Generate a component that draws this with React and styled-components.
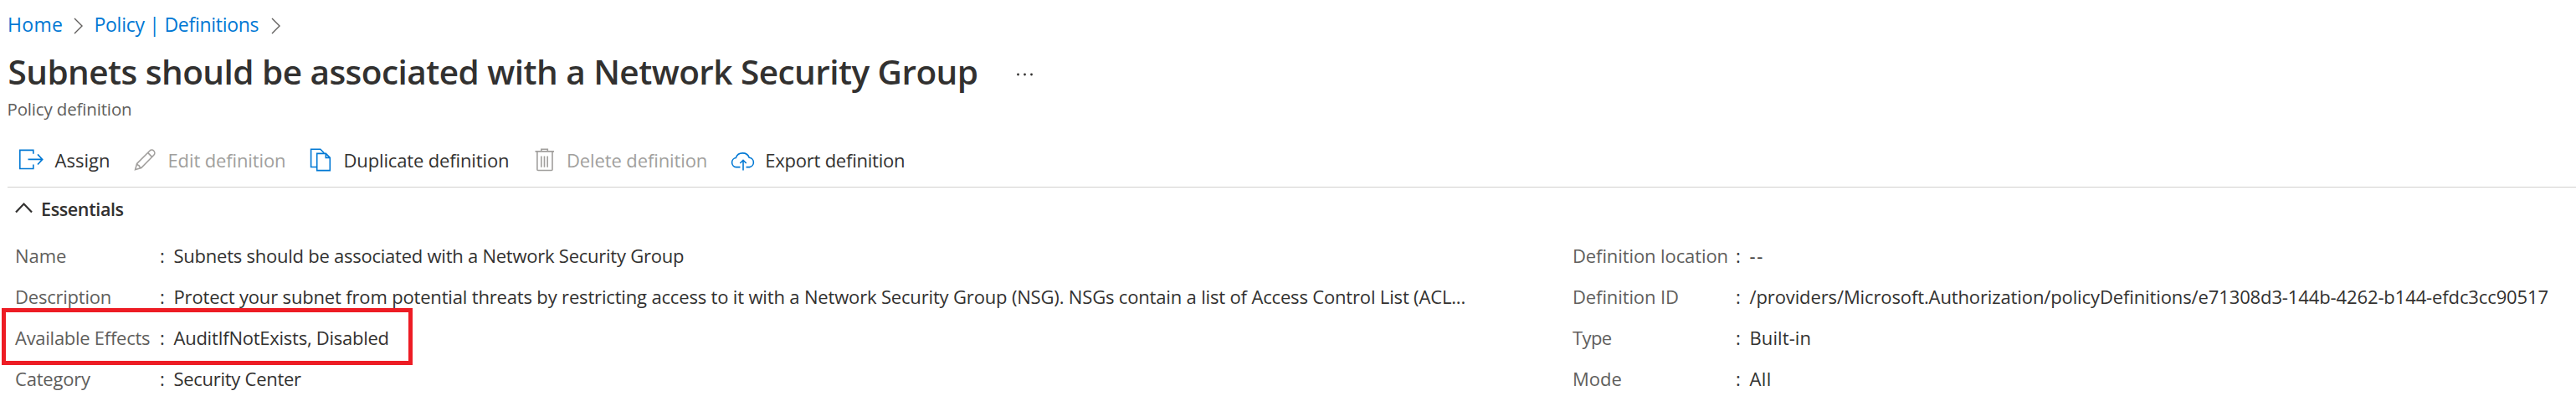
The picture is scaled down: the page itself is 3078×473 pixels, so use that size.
import React from "react";
import styled, { createGlobalStyle } from "styled-components";

const GlobalStyle = createGlobalStyle`
  body {
    margin: 0;
    background: #fff;
    color: #323130;
    font-family: "Open Sans", "Noto Sans", sans-serif;
    font-size: 22px;
  }
`;

const Page = styled.main`
  width: 3078px;
  height: 473px;
  overflow: hidden;
  white-space: nowrap;
`;

const Text = styled.span`
  letter-spacing: ${(p) => p.$ls || 0}px;
`;

const Breadcrumb = styled.nav`
  display: flex;
  align-items: center;
  height: 58px;
  padding-left: 9px;
  font-size: 23px;
`;

const Crumb = styled.a`
  width: ${(p) => p.$width}px;
  padding-bottom: 1px;
  color: #0078d4;
  letter-spacing: ${(p) => p.$ls}px;
`;

const CrumbChevron = styled.svg`
  width: 12px;
  height: 20px;
  margin: 3px 13px 0 0;
  fill: none;
  stroke: #605e5c;
  stroke-width: 1.4;
`;

const TitleRow = styled.div`
  display: flex;
  align-items: center;
  height: 56px;
  padding-left: 9.5px;
`;

const Title = styled.h1`
  width: 1203.5px;
  margin: 0;
  font-size: 40.5px;
  font-weight: 600;
  line-height: 56px;
  letter-spacing: -0.53px;
`;

const MoreButton = styled.svg`
  width: 22px;
  height: 6px;
  margin-top: 6px;
  fill: #323130;
`;

const Subtitle = styled.div`
  height: 32px;
  padding-left: 8.5px;
  color: #605e5c;
  font-size: 20.5px;
  line-height: 32px;
  letter-spacing: -0.16px;
`;

const Toolbar = styled.div`
  display: flex;
  align-items: center;
  height: 47px;
  margin: 22px 0 0 9px;
  padding: 0 0 8px 11px;
  border-bottom: 1px solid #d2d0ce;
`;

const ToolButton = styled.button`
  display: flex;
  align-items: center;
  gap: 13.5px;
  width: ${(p) => p.$width}px;
  height: 47px;
  padding: 0;
  border: 0;
  background: none;
  font: inherit;
  color: ${(p) => (p.disabled ? "#a19f9d" : "#323130")};
`;

const ToolText = styled(Text)`
  padding-bottom: 2px;
`;

const ToolIcon = styled.svg`
  flex: none;
  width: 32px;
  height: 33px;
  overflow: visible;
  fill: none;
  stroke: ${(p) => (p.$muted ? "#a19f9d" : "#0078d4")};
  stroke-width: 1.6;
`;

const EssentialsHeader = styled.div`
  display: flex;
  align-items: center;
  height: 51px;
  margin-bottom: 6px;
  padding-left: 18px;
  font-size: 21.5px;
  font-weight: 600;
`;

const Caret = styled.svg`
  width: 21px;
  height: 14px;
  margin: 0 10px 3px 0;
  fill: none;
  stroke: #323130;
  stroke-width: 2.2;
`;

const Essentials = styled.section`
  display: grid;
  grid-template-columns: 1861px 1fr;
  padding-left: 17px;
`;

const Column = styled.div`
  display: grid;
  grid-template-columns: ${(p) => p.$labelWidth}px 16.5px 1fr;
  grid-auto-rows: 49px;
  line-height: 49px;
`;

const Label = styled(Text)`
  padding-left: 1px;
  color: #605e5c;
`;

const EffectsRow = styled.div`
  display: grid;
  grid-template-columns: subgrid;
  grid-column: 1 / -1;
  position: relative;
`;

const Highlight = styled.div`
  position: absolute;
  left: -15px;
  top: -11px;
  width: 491px;
  height: 68px;
  box-sizing: border-box;
  border: 5px solid #ed1c24;
`;

const icons = {
  assign: (
    <>
      <path d="M19.8 8.8V4.4H3.8V26.5H19.8V21.5" />
      <path d="M13.5 15.4H30.3M25 9.4l5.7 6-5.7 6.1" />
    </>
  ),
  edit: (
    <>
      <path d="M6.6 27.7 8.6 20.4 23.8 5.2a3.5 3.5 0 0 1 5 5L13.8 25.6Z" />
      <path d="M8.6 20.4c.3 1.4 1 2 2.4 2.3.4 1.6 1.2 2.4 2.8 2.9M21.6 7.4l5 5" />
    </>
  ),
  duplicate: (
    <>
      <path d="M13.5 24.5H6.6V3.2H17.8L22.3 7.8" />
      <path d="M13.7 8.4H24.3L29.3 13.4V28.6H13.7ZM24.3 8.4V13.4H29.3" />
    </>
  ),
  delete: (
    <>
      <path d="M7.5 5.9H30M14.8 5.9V3.2H22.3V5.9M9.9 6V27.5q0 1 1 1H27q1 0 1-1V6" />
      <path d="M14.8 11.5V24.7M18.5 11.5V24.7M22.2 11.5V24.7" />
    </>
  ),
  export: (
    <>
      <path d="M15.5 24.6H10.6a5.6 5.6 0 0 1-.3-11.1c1.2-3.6 4.5-5.6 8-5.6 4 0 6.8 2.2 7.9 5.4a5.7 5.7 0 0 1 .4 11.3H22.5" />
      <path d="M19 28.5V16.5M15.3 20l3.7-3.7 3.7 3.7" />
    </>
  ),
};

const tools = [
  { id: "assign", text: "Assign", width: 135, ls: 0 },
  { id: "edit", text: "Edit definition", width: 210, ls: -0.12, disabled: true },
  { id: "duplicate", text: "Duplicate definition", width: 266.5, ls: -0.14 },
  { id: "delete", text: "Delete definition", width: 237.2, ls: -0.11, disabled: true },
  { id: "export", text: "Export definition", width: 220, ls: -0.22 },
];

const leftFields = [
  { label: "Name", ls: -0.05, value: "Subnets should be associated with a Network Security Group", vls: -0.24 },
  {
    label: "Description",
    ls: -0.22,
    value:
      "Protect your subnet from potential threats by restricting access to it with a Network Security Group (NSG). NSGs contain a list of Access Control List (ACL...",
    vls: -0.165,
  },
  { label: "Available Effects", ls: -0.27, value: "AuditIfNotExists, Disabled", vls: -0.26, highlighted: true },
  { label: "Category", ls: -0.21, value: "Security Center", vls: -0.28 },
];

const rightFields = [
  { label: "Definition location", ls: -0.1, value: "--", vls: 1.6 },
  {
    label: "Definition ID",
    ls: -0.11,
    value: "/providers/Microsoft.Authorization/policyDefinitions/e71308d3-144b-4262-b144-efdc3cc90517",
    vls: -0.115,
  },
  { label: "Type", ls: -0.6, value: "Built-in", vls: 0.1 },
  { label: "Mode", ls: 0, value: "All", vls: 0.4 },
];

function Field({ label, ls, value, vls, highlighted }) {
  const cells = (
    <>
      <Label $ls={ls}>{label}</Label>
      <span>:</span>
      <Text $ls={vls}>{value}</Text>
    </>
  );
  if (!highlighted) return cells;
  return (
    <EffectsRow>
      {cells}
      <Highlight />
    </EffectsRow>
  );
}

function Separator() {
  return (
    <CrumbChevron viewBox="0 0 12 20">
      <path d="M1 1 10 10 1 19" />
    </CrumbChevron>
  );
}

export default function App() {
  return (
    <Page>
      <GlobalStyle />
      <Breadcrumb>
        <Crumb $width={78.5} $ls={0.3}>Home</Crumb>
        <Separator />
        <Crumb $width={211} $ls={-0.28}>Policy | Definitions</Crumb>
        <Separator />
      </Breadcrumb>
      <TitleRow>
        <Title>Subnets should be associated with a Network Security Group</Title>
        <MoreButton viewBox="0 0 22 6">
          <circle cx="3.5" cy="3" r="1.4" />
          <circle cx="11.5" cy="3" r="1.4" />
          <circle cx="19.5" cy="3" r="1.4" />
        </MoreButton>
      </TitleRow>
      <Subtitle>Policy definition</Subtitle>
      <Toolbar>
        {tools.map((t) => (
          <ToolButton key={t.id} $width={t.width} disabled={t.disabled}>
            <ToolIcon viewBox="0 0 32 33" $muted={t.disabled}>{icons[t.id]}</ToolIcon>
            <ToolText $ls={t.ls}>{t.text}</ToolText>
          </ToolButton>
        ))}
      </Toolbar>
      <EssentialsHeader>
        <Caret viewBox="0 0 21 14">
          <path d="M1 12.5 10.5 2.5 20 12.5" />
        </Caret>
        <Text $ls={-0.37}>Essentials</Text>
      </EssentialsHeader>
      <Essentials>
        <Column $labelWidth={174}>
          {leftFields.map((f) => <Field key={f.label} {...f} />)}
        </Column>
        <Column $labelWidth={196}>
          {rightFields.map((f) => <Field key={f.label} {...f} />)}
        </Column>
      </Essentials>
    </Page>
  );
}
